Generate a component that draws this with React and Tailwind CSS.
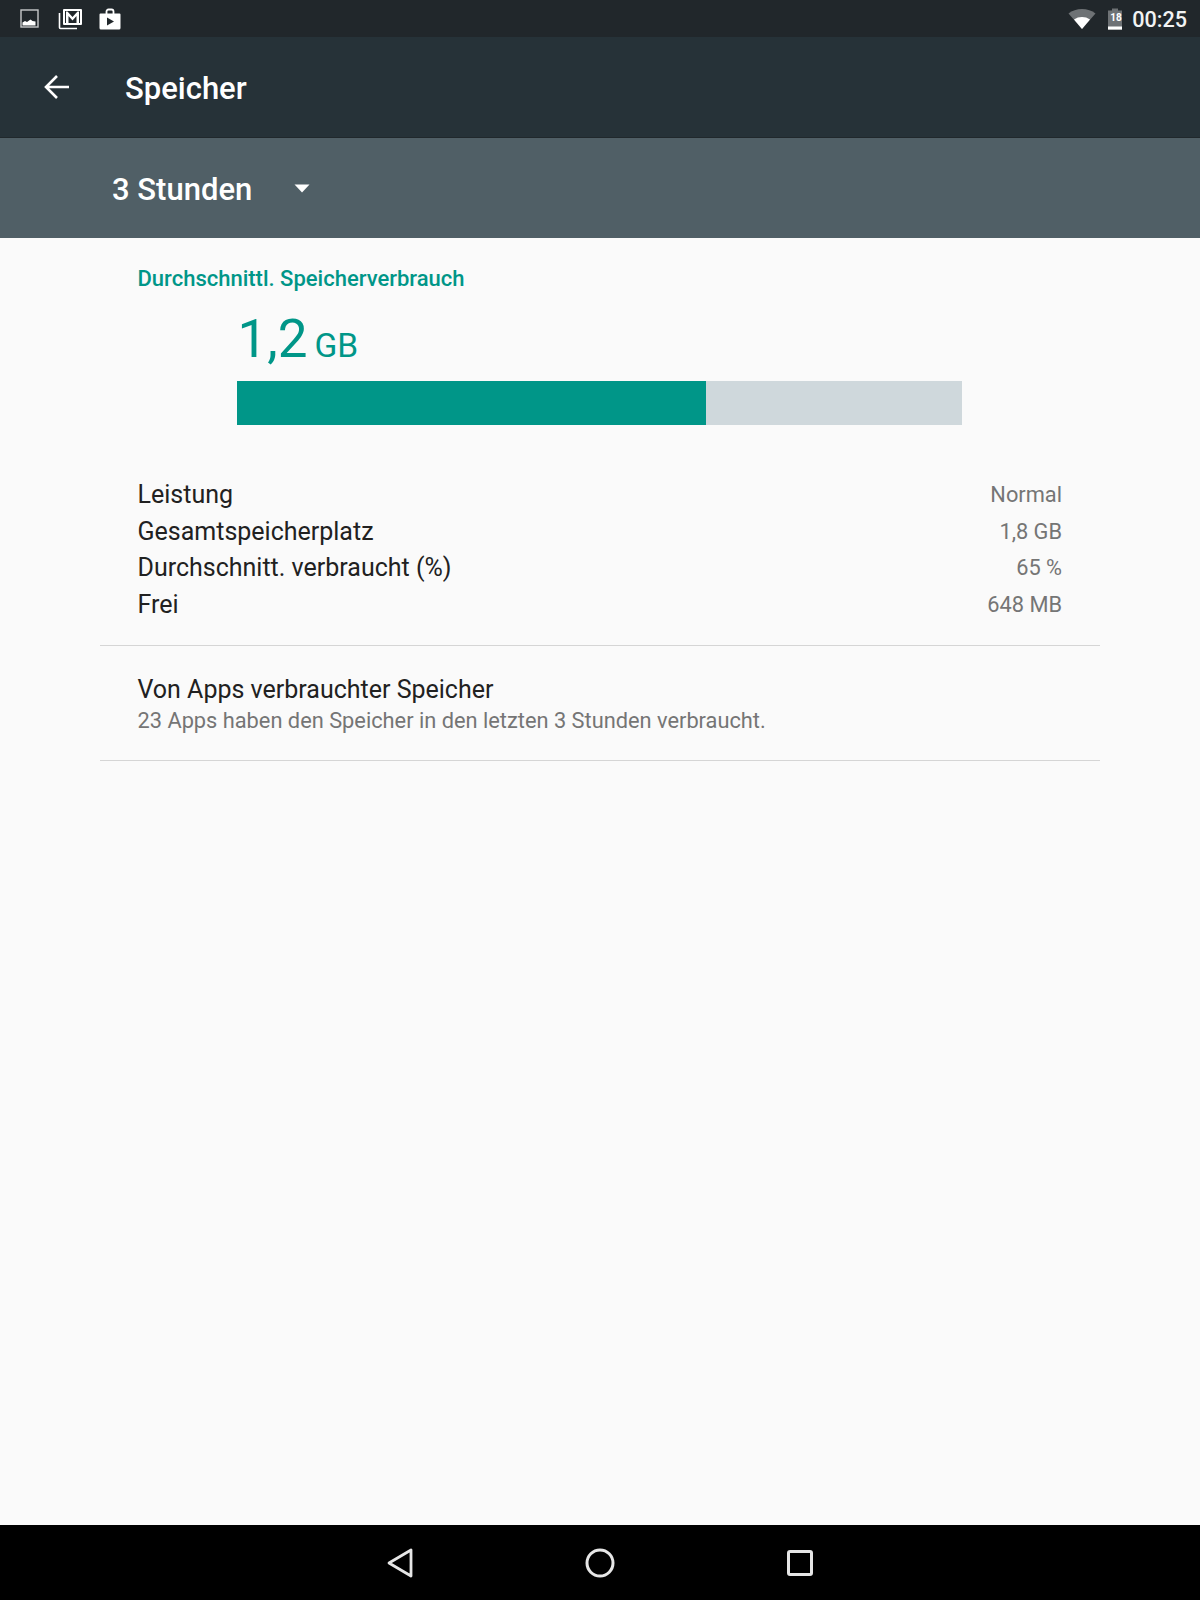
import React from "react";

const stats = [
  ["Leistung", "Normal"],
  ["Gesamtspeicherplatz", "1,8 GB"],
  ["Durchschnitt. verbraucht (%)", "65 %"],
  ["Frei", "648 MB"],
];

function StatusBar() {
  return (
    <div className="flex h-[37px] items-center justify-between bg-[#21272b] pl-[19px] pr-[13px]">
      <div className="flex items-center">
        <svg width="22" height="22" viewBox="0 0 22 22" fill="none">
          <rect x="2" y="2" width="17" height="17" stroke="#fff" strokeOpacity="0.75" strokeWidth="1.4" />
          <path d="M3.5 17.5v-3l2.5-1.5 2 1 3.5-2.5 2 1.5 3 .5v4z" fill="#fff" />
        </svg>
        <svg className="ml-[17px]" width="26" height="24" viewBox="0 0 26 24" fill="none">
          <path d="M1.5 6v14.5a1 1 0 0 0 1 1H19" stroke="#fff" strokeWidth="1.6" />
          <rect x="5" y="2" width="19" height="16" rx="1" fill="#fff" />
          <rect x="7" y="4" width="15" height="12" fill="#21272b" />
          <path d="M8 16V4.500h1.500L14.500 10l5-5.500H21V16h-2.500V9l-4 4.500-4-4.500v7z" fill="#fff" />
        </svg>
        <svg className="ml-[14px]" width="24" height="24" viewBox="0 0 24 24" fill="none">
          <path d="M8.500 7V4.500a2 2 0 0 1 2-2h3a2 2 0 0 1 2 2V7" stroke="#fff" strokeWidth="1.8" />
          <path d="M1.500 7.500a1 1 0 0 1 1-1h19a1 1 0 0 1 1 1V21a1.500 1.500 0 0 1-1.500 1.500H3A1.500 1.500 0 0 1 1.500 21z" fill="#fff" />
          <path d="M9 10.500v8l7-4z" fill="#21272b" />
        </svg>
      </div>
      <div className="flex items-center">
        <svg width="28" height="22" viewBox="0 0 28 22">
          <path d="M0.500 5.500C4 2.500 9 1 14 1s10 1.500 13.500 4.500L14 21z" fill="#fff" fillOpacity="0.35" />
          <path d="M6 11.500C8.500 9.800 11 9 14 9s5.500.8 8 2.500L14 21z" fill="#fff" />
        </svg>
        <svg className="ml-[11px]" width="16" height="22" viewBox="0 0 16 22">
          <path d="M5 0.500h6v2h4v19.500H1V2.500h4z" fill="#fff" fillOpacity="0.35" />
          <rect x="1" y="18.500" width="14" height="3" fill="#fff" />
        </svg>
        <span className="relative -left-[13px] -top-[1px] w-[10px] text-[10px] font-bold leading-none text-white">
          18
        </span>
        <span className="-ml-[1px] pt-[2px] text-[21.600px] font-medium leading-none text-[#f2f3f3]">00:25</span>
      </div>
    </div>
  );
}

function Toolbar() {
  return (
    <div className="flex h-[101px] items-center border-b border-[#20282c] bg-[#263238]">
      <svg className="ml-[44px]" width="26" height="26" viewBox="0 0 26 26" fill="none">
        <path d="M25 13H2.500M13 2 2 13l11 11" stroke="#fff" strokeWidth="2.600" />
      </svg>
      <span className="ml-[55px] pt-[3px] text-[31px] font-medium leading-none text-white">Speicher</span>
    </div>
  );
}

function Spinner() {
  return (
    <div className="flex h-[100px] items-center bg-[#505f66] pl-[112px]">
      <span className="pt-[2px] text-[31px] font-medium leading-none text-white">3 Stunden</span>
      <svg className="ml-[42px]" width="16" height="9" viewBox="0 0 16 9">
        <path d="M0.500 0.500h15L8 8.500z" fill="#fff" />
      </svg>
    </div>
  );
}

function Usage() {
  return (
    <div className="pl-[137.500px] pt-[29px]">
      <div className="text-[22px] font-medium leading-[24px] text-[#009688]">
        Durchschnittl. Speicherverbrauch
      </div>
      <div className="ml-[100px] mt-[20px] flex h-[56px] items-baseline text-[#009688]">
        <span className="text-[53px] leading-[56px]">1,2</span>
        <span className="ml-[7px] text-[33.500px] leading-[56px]">GB</span>
      </div>
      <div className="ml-[99.500px] mt-[14px] flex h-[44px] w-[725px] bg-[#cfd8dc]">
        <div className="h-full w-[469px] bg-[#009688]" />
      </div>
    </div>
  );
}

function App() {
  return (
    <div className="flex h-[1600px] w-[1200px] flex-col bg-[#fafafa] font-['Roboto',sans-serif]">
      <StatusBar />
      <Toolbar />
      <Spinner />
      <div className="flex-1">
        <Usage />
        <div className="mx-[100px] mt-[51px] border-b border-[#d5d5d5] pb-[22px] pl-[37.500px] pr-[38px]">
          {stats.map(([label, value]) => (
            <div key={label} className="flex h-[36.700px] items-center justify-between">
              <span className="text-[25px] leading-none text-[#212121]">{label}</span>
              <span className="pt-[1px] text-[21.800px] leading-none text-[#757575]">{value}</span>
            </div>
          ))}
        </div>
        <div className="mx-[100px] h-[115px] border-b border-[#d5d5d5] pl-[37.500px] pr-[38px] pt-[28px]">
          <div className="text-[25px] leading-[32px] text-[#212121]">Von Apps verbrauchter Speicher</div>
          <div className="text-[21.800px] leading-[30px] text-[#757575]">
            23 Apps haben den Speicher in den letzten 3 Stunden verbraucht.
          </div>
        </div>
      </div>
      <div className="flex h-[75px] items-center justify-center gap-[150px] bg-black">
        <svg width="50" height="50" viewBox="0 0 50 50" fill="none">
          <path d="M14 25 36 12v26z" stroke="#e6e6e6" strokeWidth="2.800" strokeLinejoin="round" />
        </svg>
        <svg width="50" height="50" viewBox="0 0 50 50" fill="none">
          <circle cx="25" cy="25" r="13" stroke="#e6e6e6" strokeWidth="3" />
        </svg>
        <svg width="50" height="50" viewBox="0 0 50 50" fill="none">
          <rect x="13.500" y="13.500" width="23" height="23" rx="1.500" stroke="#e6e6e6" strokeWidth="3" />
        </svg>
      </div>
    </div>
  );
}

export default App;
